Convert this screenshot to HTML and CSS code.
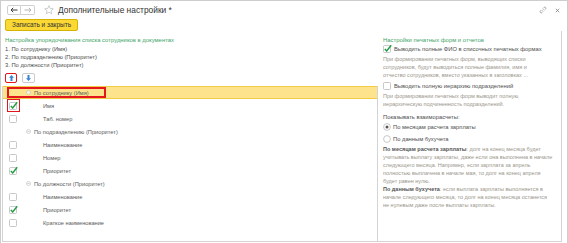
FILE: index.html
```html
<!DOCTYPE html>
<html lang="ru">
<head>
  <meta charset="UTF-8">
  <title>Дополнительные настройки</title>
  <link rel="stylesheet" href="styles.css">
</head>
<body>

<div class="window">

  <!-- Title bar -->
  <header class="titlebar">
    <div class="nav">
      <button class="nav-btn">
        <svg width="8" height="6" viewBox="0 0 8 6"><path d="M7.5 3H1M3.2 0.8L1 3l2.2 2.2" fill="none" stroke="#3b3b3b" stroke-width="1"/></svg>
      </button>
      <button class="nav-btn">
        <svg width="8" height="6" viewBox="0 0 8 6"><path d="M0.5 3H7M4.8 0.8L7 3 4.8 5.2" fill="none" stroke="#b4b4b4" stroke-width="1"/></svg>
      </button>
    </div>
    <svg class="star" width="10" height="10" viewBox="0 0 10 10"><path d="M5 0.7l1.3 2.8 3 0.3-2.3 2 0.7 3-2.7-1.6-2.7 1.6 0.7-3-2.3-2 3-0.3z" fill="none" stroke="#b9b9b9" stroke-width="0.7"/></svg>
    <h1 class="title">Дополнительные настройки *</h1>
    <div class="win-tools">
      <svg width="8" height="8" viewBox="0 0 8 8"><path d="M3.4 4.6L4.6 3.4M2.6 3.8L1.4 5a1.1 1.1 0 0 0 1.6 1.6l1.2-1.2M5.4 4.2L6.6 3A1.1 1.1 0 0 0 5 1.4L3.8 2.6" fill="none" stroke="#8d8d8d" stroke-width="0.7"/></svg>
      <svg width="5" height="5" viewBox="0 0 5 5"><path d="M0.8 0.8l3.4 3.4M4.2 0.8L0.8 4.2" stroke="#7c7c7c" stroke-width="0.8"/></svg>
    </div>
  </header>

  <!-- Command bar -->
  <div class="toolbar">
    <button class="btn-primary">Записать и закрыть</button>
  </div>

  <div class="content">

    <!-- Sort order -->
    <section class="col-left">
      <div class="group-title">Настройка упорядочивания списка сотрудников в документах</div>
      <div class="order-list">
        <div>1. По сотруднику (Имя)</div>
        <div>2. По подразделению (Приоритет)</div>
        <div>3. По должности (Приоритет)</div>
      </div>

      <div class="move-btns">
        <button class="move-btn marked">
          <svg width="5" height="6" viewBox="0 0 5 6"><path d="M2.5 0L5 2.8H3.5V6h-2V2.8H0z" fill="#3b83d4"/></svg>
        </button>
        <button class="move-btn">
          <svg width="5" height="6" viewBox="0 0 5 6"><path d="M2.5 6L5 3.2H3.5V0h-2v3.2H0z" fill="#3b83d4"/></svg>
        </button>
      </div>

      <div class="tree">
        <div class="tree-row head">
          <span class="head-cell">
            <svg class="marker" width="5" height="5" viewBox="0 0 5 5"><circle cx="2.5" cy="2.5" r="2" fill="#f3f3f3" stroke="#c9c0a0" stroke-width="0.6"/></svg>
            <span class="group-name">По сотруднику (Имя)</span>
          </span>
        </div>

        <div class="tree-row">
          <span class="check-cell">
            <svg class="cb marked" width="9" height="9" viewBox="0 0 9 9"><rect x="0.5" y="1.5" width="7" height="7" rx="1" fill="#fff" stroke="#b2b2b2" stroke-width="0.7"/><path d="M1.8 5l1.9 2L8.2 1.2" fill="none" stroke="#1e9c3e" stroke-width="1.4"/></svg>
          </span>
          <span class="item-name">Имя</span>
        </div>
        <div class="tree-row">
          <span class="check-cell">
            <svg class="cb" width="9" height="9" viewBox="0 0 9 9"><rect x="0.5" y="1.5" width="7" height="7" rx="1" fill="#fff" stroke="#b2b2b2" stroke-width="0.7"/></svg>
          </span>
          <span class="item-name">Таб. номер</span>
        </div>

        <div class="tree-row">
          <span class="check-cell"></span>
          <svg class="marker" width="5" height="5" viewBox="0 0 5 5"><circle cx="2.5" cy="2.5" r="2" fill="#fff" stroke="#bcbcbc" stroke-width="0.6"/><path d="M1.4 2.5h2.2" stroke="#b0b0b0" stroke-width="0.6"/></svg>
          <span class="group-name">По подразделению (Приоритет)</span>
        </div>
        <div class="tree-row">
          <span class="check-cell">
            <svg class="cb" width="9" height="9" viewBox="0 0 9 9"><rect x="0.5" y="1.5" width="7" height="7" rx="1" fill="#fff" stroke="#b2b2b2" stroke-width="0.7"/></svg>
          </span>
          <span class="item-name">Наименование</span>
        </div>
        <div class="tree-row">
          <span class="check-cell">
            <svg class="cb" width="9" height="9" viewBox="0 0 9 9"><rect x="0.5" y="1.5" width="7" height="7" rx="1" fill="#fff" stroke="#b2b2b2" stroke-width="0.7"/></svg>
          </span>
          <span class="item-name">Номер</span>
        </div>
        <div class="tree-row">
          <span class="check-cell">
            <svg class="cb" width="9" height="9" viewBox="0 0 9 9"><rect x="0.5" y="1.5" width="7" height="7" rx="1" fill="#fff" stroke="#b2b2b2" stroke-width="0.7"/><path d="M1.8 5l1.9 2L8.2 1.2" fill="none" stroke="#1e9c3e" stroke-width="1.4"/></svg>
          </span>
          <span class="item-name">Приоритет</span>
        </div>

        <div class="tree-row">
          <span class="check-cell"></span>
          <svg class="marker" width="5" height="5" viewBox="0 0 5 5"><circle cx="2.5" cy="2.5" r="2" fill="#fff" stroke="#bcbcbc" stroke-width="0.6"/><path d="M1.4 2.5h2.2" stroke="#b0b0b0" stroke-width="0.6"/></svg>
          <span class="group-name">По должности (Приоритет)</span>
        </div>
        <div class="tree-row">
          <span class="check-cell">
            <svg class="cb" width="9" height="9" viewBox="0 0 9 9"><rect x="0.5" y="1.5" width="7" height="7" rx="1" fill="#fff" stroke="#b2b2b2" stroke-width="0.7"/></svg>
          </span>
          <span class="item-name">Наименование</span>
        </div>
        <div class="tree-row">
          <span class="check-cell">
            <svg class="cb" width="9" height="9" viewBox="0 0 9 9"><rect x="0.5" y="1.5" width="7" height="7" rx="1" fill="#fff" stroke="#b2b2b2" stroke-width="0.7"/><path d="M1.8 5l1.9 2L8.2 1.2" fill="none" stroke="#1e9c3e" stroke-width="1.4"/></svg>
          </span>
          <span class="item-name">Приоритет</span>
        </div>
        <div class="tree-row">
          <span class="check-cell">
            <svg class="cb" width="9" height="9" viewBox="0 0 9 9"><rect x="0.5" y="1.5" width="7" height="7" rx="1" fill="#fff" stroke="#b2b2b2" stroke-width="0.7"/></svg>
          </span>
          <span class="item-name">Краткое наименование</span>
        </div>
      </div>
    </section>

    <!-- Print forms -->
    <section class="col-right">
      <div class="group-title">Настройки печатных форм и отчетов</div>

      <label class="check-row">
        <svg width="9" height="9" viewBox="0 0 9 9"><rect x="0.5" y="1.5" width="7" height="7" rx="1" fill="#fff" stroke="#b2b2b2" stroke-width="0.7"/><path d="M1.8 5l1.9 2L8.2 1.2" fill="none" stroke="#1e9c3e" stroke-width="1.4"/></svg>
        Выводить полные ФИО в списочных печатных формах
      </label>
      <p class="note">При формировании печатных форм, выводящих списки<br>сотрудников, будут выводиться полные фамилия, имя и<br>отчество сотрудников, вместо указанных в заголовках ...</p>

      <label class="check-row">
        <svg width="9" height="9" viewBox="0 0 9 9"><rect x="0.5" y="1.5" width="7" height="7" rx="1" fill="#fff" stroke="#b2b2b2" stroke-width="0.7"/></svg>
        Выводить полную иерархию подразделений
      </label>
      <p class="note">При формировании печатных форм выводит полную<br>иерархическую подчиненность подразделений.</p>

      <div class="field-label">Показывать взаиморасчеты:</div>
      <label class="radio-row first">
        <svg width="8" height="8" viewBox="0 0 8 8"><circle cx="4" cy="4" r="3.4" fill="#fff" stroke="#b2b2b2" stroke-width="0.7"/><circle cx="4" cy="4" r="1.5" fill="#555"/></svg>
        По месяцам расчета зарплаты
      </label>
      <label class="radio-row">
        <svg width="8" height="8" viewBox="0 0 8 8"><circle cx="4" cy="4" r="3.4" fill="#fff" stroke="#b2b2b2" stroke-width="0.7"/></svg>
        По данным бухучета
      </label>

      <p class="note explain"><b>По месяцам расчета зарплаты</b>: долг на конец месяца будет<br>учитывать выплату зарплаты, даже если она выполнена в начале<br>следующего месяца. Например, если зарплата за апрель<br>полностью выплачена в начале мая, то долг на конец апреля<br>будет равен нулю.<br><b>По данным бухучета</b>: если выплата зарплаты выполняется в<br>начале следующего месяца, то долг на конец месяца останется<br>не нулевым даже после выплаты зарплаты.</p>
    </section>

  </div>
</div>

</body>
</html>
```

FILE: styles.css
```css
body {
  margin: 0;
  font-family: "Liberation Sans", Arial, sans-serif;
  font-size: 5.8px;
  color: #4a4a4a;
  background: #fff;
}

.window {
  width: 568px;
  height: 243px;
  box-sizing: border-box;
  border: 1px solid #cdcdcd;
  border-bottom: none;
  display: flex;
  flex-direction: column;
  overflow: hidden;
}

/* title bar */
.titlebar {
  height: 18px;
  display: flex;
  align-items: center;
  padding: 0 7px 0 6px;
  flex-shrink: 0;
}

.nav {
  display: flex;
}

.nav-btn {
  width: 14px;
  height: 10px;
  padding: 0;
  margin: 0;
  border: 1px solid #cfcfcf;
  background: #fff;
  display: flex;
  align-items: center;
  justify-content: center;
}

.nav-btn:first-child {
  border-radius: 2px 0 0 2px;
}

.nav-btn:last-child {
  border-left: none;
  border-radius: 0 2px 2px 0;
}

.star {
  margin-left: 9px;
}

.title {
  margin: 0 0 0 4px;
  font-size: 8.4px;
  font-weight: normal;
  color: #333;
}

.win-tools {
  margin-left: auto;
  display: flex;
  align-items: center;
  gap: 8px;
}

/* command bar */
.toolbar {
  padding-left: 4px;
  flex-shrink: 0;
}

.btn-primary {
  height: 12px;
  padding: 0 6px;
  border: 1px solid #d6b300;
  border-radius: 2px;
  background: #fbd834;
  font-family: inherit;
  font-size: 6.5px;
  color: #333;
  line-height: 10px;
}

/* content */
.content {
  flex: 1;
  display: flex;
  margin: 0 0 1px 1px;
  width: 560px;
  box-sizing: border-box;
  padding-top: 5px;
  border-right: 1px solid #d4d4d4;
  border-bottom: 1px solid #d4d4d4;
}

.group-title {
  font-size: 5.9px;
  color: #3fa468;
  line-height: 8px;
  white-space: nowrap;
}

.col-left {
  width: 376px;
  display: flex;
  flex-direction: column;
}

.col-left .group-title,
.order-list,
.move-btns {
  padding-left: 3px;
}

.order-list {
  margin-top: 1px;
  line-height: 8px;
  color: #4d4d4d;
}

.move-btns {
  display: flex;
  gap: 5px;
  margin-top: 4px;
}

.move-btn {
  width: 13px;
  height: 10px;
  padding: 0;
  border: 1px solid #cbcbcb;
  border-radius: 2px;
  background: #fff;
  display: flex;
  align-items: center;
  justify-content: center;
}

.move-btn.marked {
  width: 12px;
  outline: 1.5px solid #e3161d;
  outline-offset: -1px;
}

/* tree */
.tree {
  flex: 1;
  margin-top: 3px;
  border-left: 1px solid #d4d4d4;
  border-right: 1px solid #d4d4d4;
}

.tree-row {
  height: 13px;
  display: flex;
  align-items: center;
  font-size: 5.7px;
  color: #5a5a5a;
  white-space: nowrap;
}

.tree-row.head {
  box-sizing: border-box;
  background: #fde48c;
  border-top: 1px solid #f1cb43;
  border-bottom: 1px solid #f1cb43;
}

.head-cell {
  box-sizing: border-box;
  height: 11px;
  width: 99px;
  margin-left: 4px;
  padding-left: 17px;
  display: flex;
  align-items: center;
  border: 2px solid #e3161d;
}

.check-cell {
  width: 23px;
  padding-left: 6px;
  box-sizing: border-box;
  display: flex;
  align-items: center;
  flex-shrink: 0;
}

.cb.marked {
  outline: 1.5px solid #e3161d;
  outline-offset: 1px;
}

.marker {
  flex-shrink: 0;
}

.group-name {
  margin-left: 3px;
}

.item-name {
  margin-left: 17px;
}

/* right panel */
.col-right {
  margin-left: 5px;
  width: 176px;
  white-space: nowrap;
}

.check-row,
.radio-row {
  display: flex;
  align-items: center;
  gap: 2px;
  height: 9px;
  color: #4d4d4d;
}

.note {
  margin: 2px 0 0;
  font-size: 5.5px;
  line-height: 8px;
  color: #9b968c;
}

.note b {
  color: #555;
}

.check-row + .note + .check-row {
  margin-top: 2px;
}

.field-label {
  margin-top: 5px;
  line-height: 8px;
  color: #4d4d4d;
}

.radio-row {
  margin-top: 3px;
}

.radio-row.first {
  margin-top: 1px;
}
```
